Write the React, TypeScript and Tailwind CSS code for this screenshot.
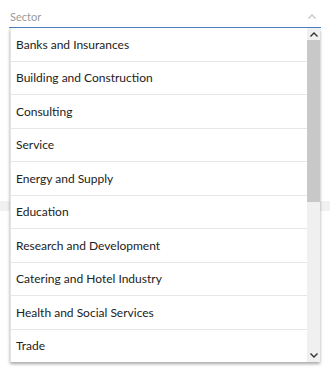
import React from "react";

const sectors = [
  "Banks and Insurances",
  "Building and Construction",
  "Consulting",
  "Service",
  "Energy and Supply",
  "Education",
  "Research and Development",
  "Catering and Hotel Industry",
  "Health and Social Services",
  "Trade",
];

function Chevron({ up, className }: { up?: boolean; className?: string }) {
  return (
    <svg width="8" height="5" viewBox="0 0 8 5" className={className}>
      <path
        d={up ? "M0.5 4.5 L4 1 L7.5 4.5" : "M0.5 0.5 L4 4 L7.5 0.5"}
        fill="none"
        stroke="currentColor"
        strokeWidth="1.4"
      />
    </svg>
  );
}

export default function App() {
  return (
    <div className="relative w-[330px] h-[372px] bg-white overflow-hidden font-['Lato',sans-serif]">
      {/* Field */}
      <div className="mx-[9px] h-[28px] pt-[8px] flex items-start justify-between border-b border-[#4a7fc0]">
        <span className="text-[11px] leading-[18px] text-[#9a9a9a] pl-[1px]">Sector</span>
        <Chevron up className="text-[#c8c8c8] mt-[6px] mr-[5px]" />
      </div>

      {/* content behind the menu */}
      <div className="mt-[173px] h-[10px] bg-[#f1f1f1]" />

      {/* Dropdown */}
      <div className="absolute left-[10px] top-[28px] w-[310px] h-[334px] bg-white flex overflow-hidden border-l border-[#e2e2e2] shadow-[0_2px_3px_rgba(0,0,0,0.35)]">
        <ul className="flex-1">
          {sectors.map((s) => (
            <li
              key={s}
              className="h-[33.5px] flex items-center pl-[5px] pt-[1px] border-b border-[#e6e6e6] text-[12px] text-[#222]"
            >
              {s}
            </li>
          ))}
        </ul>
        <div className="w-[13px] flex flex-col bg-[#f0f0f0]">
          <div className="h-[12px] flex items-center justify-center text-[#333]">
            <Chevron up />
          </div>
          <div className="h-[162px] bg-[#c8c8c8]" />
          <div className="flex-1" />
          <div className="h-[14px] flex items-center justify-center text-[#333]">
            <Chevron />
          </div>
        </div>
      </div>
    </div>
  );
}
